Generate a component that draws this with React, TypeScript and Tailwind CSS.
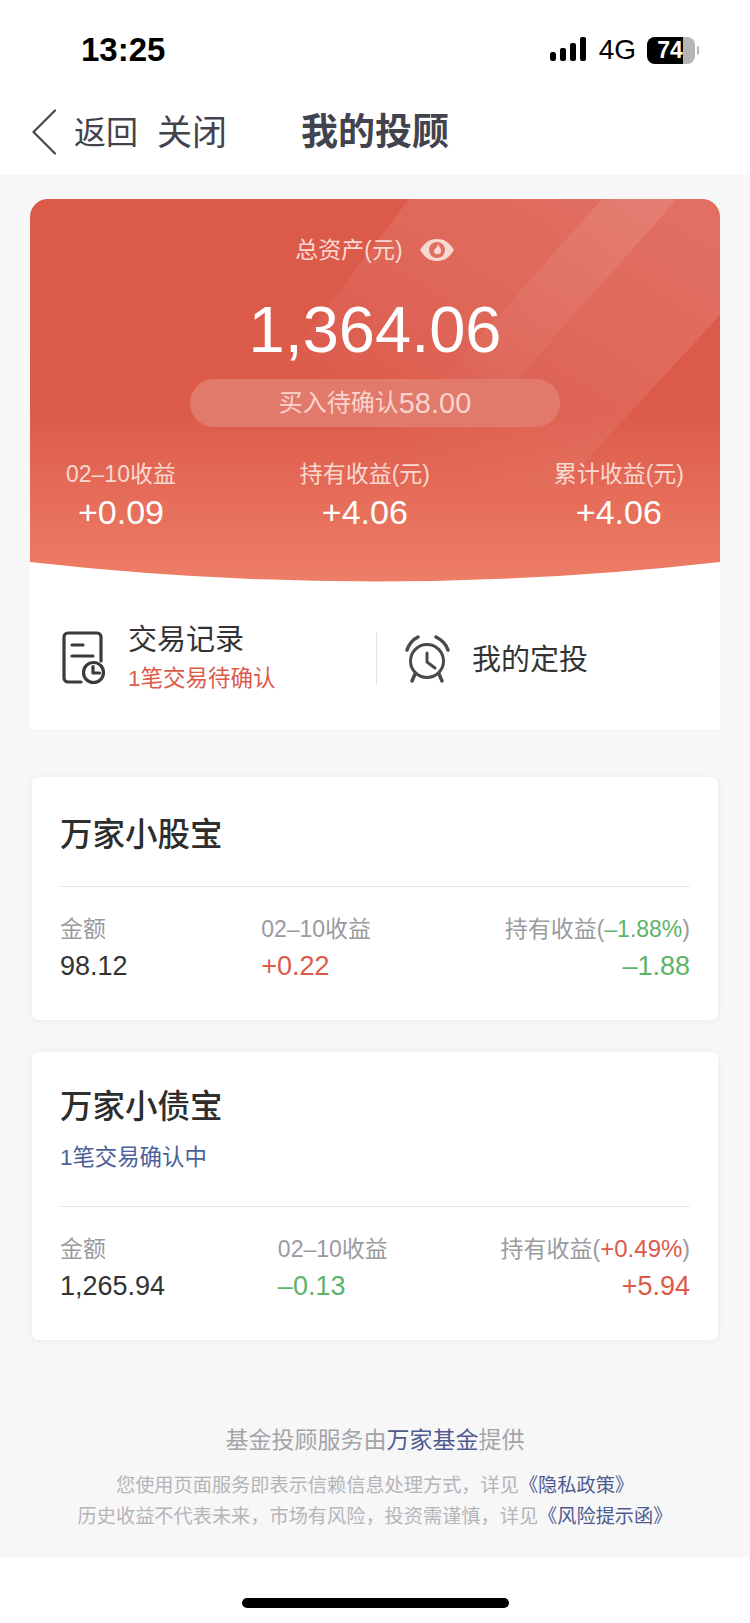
import React from "react";

const SANS = "font-['Liberation_Sans','Noto_Sans_CJK_SC',sans-serif]";

function Signal() {
  return (
    <svg width="38" height="26" viewBox="0 0 38 26" fill="#000">
      <rect x="0" y="15" width="6" height="9" rx="2.5" />
      <rect x="10" y="11" width="6" height="13" rx="2" />
      <rect x="20" y="6" width="6" height="18" rx="2" />
      <rect x="30" y="0" width="6" height="24" rx="2" />
    </svg>
  );
}

function Battery() {
  return (
    <div className="flex items-center">
      <div className="relative w-[48px] h-[27px] rounded-[8px] overflow-hidden bg-[#b5b5b5]">
        <div className="w-[36px] h-full bg-black" />
        <span className="absolute inset-0 pr-[2px] flex items-center justify-center text-white text-[23px] font-bold leading-none">74</span>
      </div>
      <div className="ml-[2px] w-[2px] h-[9px] rounded-r-full bg-[#b5b5b5]" />
    </div>
  );
}

function Eye() {
  return (
    <svg width="36" height="24" viewBox="0 0 36 24">
      <path d="M1 12C6 4 11 1 18 1s12 3 17 11c-5 8-10 11-17 11S6 20 1 12Z" fill="#f7d9d2" />
      <circle cx="18" cy="12" r="8" fill="#e0705f" />
      <path d="M19 6c1 3 4 5 3 8-1 3-6 3-7 0-.6-2 1-3 2-4 .8-1 1.6-2 2-4Z" fill="#f7d9d2" />
    </svg>
  );
}

function RecordIcon() {
  return (
    <svg width="44" height="54" viewBox="0 0 44 54" fill="none" stroke="#3a3a3a" strokeWidth="3.2" strokeLinecap="round" strokeLinejoin="round">
      <path d="M19 51H6a4 4 0 0 1-4-4V6a4 4 0 0 1 4-4h29a4 4 0 0 1 4 4v24" />
      <path d="M10 14h11M10 25h21" />
      <circle cx="31.5" cy="41.5" r="10" />
      <path d="M31 35.5v6.5h6.5" />
    </svg>
  );
}

function AlarmIcon() {
  return (
    <svg width="48" height="50" viewBox="0 0 48 50" fill="none" stroke="#4a4a4a" strokeLinecap="round" strokeLinejoin="round">
      <circle cx="24" cy="26" r="16.5" strokeWidth="3" />
      <path d="M24 18v9l8 6" strokeWidth="3" />
      <path d="M4 15C6 9 9 5 15 2" strokeWidth="3.5" />
      <path d="M33 2C39 5 43 9 45 15" strokeWidth="3.5" />
      <path d="M9 46l3-7M39 46l-3-7" strokeWidth="3.5" />
    </svg>
  );
}

function Stat({ label, value }: { label: string; value: string }) {
  return (
    <div className="flex flex-col items-center">
      <div className="text-[23px] leading-[30px] text-[#f9d8d0] whitespace-nowrap">{label}</div>
      <div className="mt-[3px] text-[34px] leading-[40px] text-white">{value}</div>
    </div>
  );
}

const RED = "text-[#dc5a4a]";
const GREEN = "text-[#5cb36a]";

function Cell({ label, value, cls, right }: { label: React.ReactNode; value: string; cls: string; right?: boolean }) {
  return (
    <div className={right ? "flex flex-col items-end" : "flex flex-col items-start"}>
      <div className="text-[23px] leading-[30px] text-[#9a9a9f] whitespace-nowrap">{label}</div>
      <div className={`mt-[4px] text-[27px] leading-[36px] ${cls}`}>{value}</div>
    </div>
  );
}

export default function App() {
  return (
    <div className={`w-[750px] h-[1623px] flex flex-col bg-white overflow-hidden ${SANS}`}>
      <div className="h-[88px] pt-[30px] pl-[81px] pr-[51px] flex items-start justify-between">
        <span className="text-[33px] leading-[40px] font-bold text-black">13:25</span>
        <div className="h-[40px] flex items-center">
          <Signal />
          <span className="ml-[11px] text-[28px] leading-none text-black">4G</span>
          <div className="ml-[11px]"><Battery /></div>
        </div>
      </div>

      <div className="h-[87px] pl-[32px] flex items-center text-[#43434d]">
        <svg width="24" height="46" viewBox="0 0 24 46" fill="none" stroke="#43434d" strokeWidth="2.2" strokeLinecap="round" strokeLinejoin="round">
          <path d="M23 1.5 1.5 23 23 44.5" />
        </svg>
        <span className="ml-[18px] mt-[2px] text-[32px] leading-none">返回</span>
        <span className="ml-[19px] mt-[2px] text-[35px] leading-none">关闭</span>
        <span className="ml-[74px] mt-[2px] text-[37px] leading-none font-bold">我的投顾</span>
      </div>

      <div className="flex-1 bg-[#f7f7f8] flex flex-col">
        <div className="mt-[24px] mx-[30px] relative h-[383px] rounded-t-[18px] overflow-hidden bg-gradient-to-b from-[#dc5a4a] from-55% to-[#ee7e67] px-[36px] pt-[36px] flex flex-col items-center">
          <svg className="absolute inset-0" width="690" height="383" viewBox="0 0 690 383">
            <defs>
              <linearGradient id="fade" gradientUnits="userSpaceOnUse" x1="600" y1="0" x2="420" y2="290">
                <stop offset="0" stopColor="#fff" stopOpacity="0.13" />
                <stop offset="0.5" stopColor="#fff" stopOpacity="0.08" />
                <stop offset="1" stopColor="#fff" stopOpacity="0" />
              </linearGradient>
              <linearGradient id="band" gradientUnits="userSpaceOnUse" x1="620" y1="0" x2="400" y2="250">
                <stop offset="0" stopColor="#fff" stopOpacity="0.1" />
                <stop offset="1" stopColor="#fff" stopOpacity="0" />
              </linearGradient>
            </defs>
            <path d="M379 0H690V116L530 290H160Z" fill="url(#fade)" />
            <path d="M572 0H647L425 250H350Z" fill="url(#band)" />
          </svg>

          <div className="relative flex items-center h-[30px]">
            <span className="text-[23px] leading-[30px] text-[#f9d8d0]">总资产(元)</span>
            <span className="ml-[16px] flex"><Eye /></span>
          </div>
          <div className="relative mt-[33px] text-[65px] leading-[64px] text-white">1,364.06</div>
          <div className="relative mt-[17px] w-[370px] h-[48px] rounded-full bg-[#e27a6c] flex items-center justify-center text-[#f9d4cc]">
            <span className="text-[24px] leading-none">买入待确认</span>
            <span className="text-[29px] leading-none">58.00</span>
          </div>
          <div className="relative mt-[32px] w-full flex justify-between">
            <Stat label="02–10收益" value="+0.09" />
            <Stat label="持有收益(元)" value="+4.06" />
            <Stat label="累计收益(元)" value="+4.06" />
          </div>
          <svg className="absolute left-0 bottom-0" width="690" height="21" viewBox="0 0 690 21">
            <path d="M0 1Q345 40 690 1V21H0Z" fill="#fff" />
          </svg>
        </div>

        <div className="mx-[30px] h-[147px] bg-white flex items-center pt-[5px]">
          <div className="w-[346px] pl-[32px] flex items-center">
            <RecordIcon />
            <div className="ml-[22px] mb-[2px]">
              <div className="text-[29px] leading-[38px] text-[#333]">交易记录</div>
              <div className="mt-[5px] text-[22.5px] leading-[30px] text-[#dc5a4a]">1笔交易待确认</div>
            </div>
          </div>
          <div className="w-[1px] h-[53px] bg-[#e2e2e2]" />
          <div className="ml-[26px] mt-[4px] flex items-center">
            <AlarmIcon />
            <span className="ml-[21px] text-[29px] leading-[38px] text-[#333]">我的定投</span>
          </div>
        </div>

        <div className="mt-[48px] mx-[32px] h-[243px] bg-white rounded-[6px] shadow-[0_1px_6px_rgba(0,0,0,0.06)] px-[28px] pt-[36px]">
          <div className="text-[32.5px] leading-[44px] font-medium text-[#2e2e2e]">万家小股宝</div>
          <div className="mt-[29px] h-[1px] bg-[#e8e8e8]" />
          <div className="mt-[27px] flex justify-between">
            <Cell label="金额" value="98.12" cls="text-[#333]" />
            <Cell label="02–10收益" value="+0.22" cls={RED} />
            <Cell right label={<>持有收益(<span className={GREEN}>–1.88%</span>)</>} value="–1.88" cls={GREEN} />
          </div>
        </div>

        <div className="mt-[32px] mx-[32px] h-[288px] bg-white rounded-[6px] shadow-[0_1px_6px_rgba(0,0,0,0.06)] px-[28px] pt-[33px]">
          <div className="text-[32.5px] leading-[44px] font-medium text-[#2e2e2e]">万家小债宝</div>
          <div className="mt-[14px] text-[22.4px] leading-[30px] text-[#4a6199]">1笔交易确认中</div>
          <div className="mt-[33px] h-[1px] bg-[#e8e8e8]" />
          <div className="mt-[27px] flex justify-between">
            <Cell label="金额" value="1,265.94" cls="text-[#333]" />
            <Cell label="02–10收益" value="–0.13" cls={GREEN} />
            <Cell right label={<>持有收益(<span className={`text-[24px] ${RED}`}>+0.49%</span>)</>} value="+5.94" cls={RED} />
          </div>
        </div>

        <div className="mt-[85px] flex flex-col items-center">
          <div className="text-[23px] leading-[30px] text-[#a3a3a8]">
            基金投顾服务由<span className="text-[#4f5b8f]">万家基金</span>提供
          </div>
          <div className="mt-[15px] text-[19.2px] leading-[31px] text-[#b5b5b9] whitespace-nowrap">
            您使用页面服务即表示信赖信息处理方式，详见<span className="text-[#4f5b8f]">《隐私政策》</span>
          </div>
          <div className="text-[19.2px] leading-[31px] text-[#b5b5b9] whitespace-nowrap">
            历史收益不代表未来，市场有风险，投资需谨慎，详见<span className="text-[#4f5b8f]">《风险提示函》</span>
          </div>
        </div>
        <div className="h-[25px]" />
      </div>

      <div className="h-[66px] flex justify-center pt-[41px]">
        <div className="w-[267px] h-[10px] rounded-full bg-black" />
      </div>
    </div>
  );
}
